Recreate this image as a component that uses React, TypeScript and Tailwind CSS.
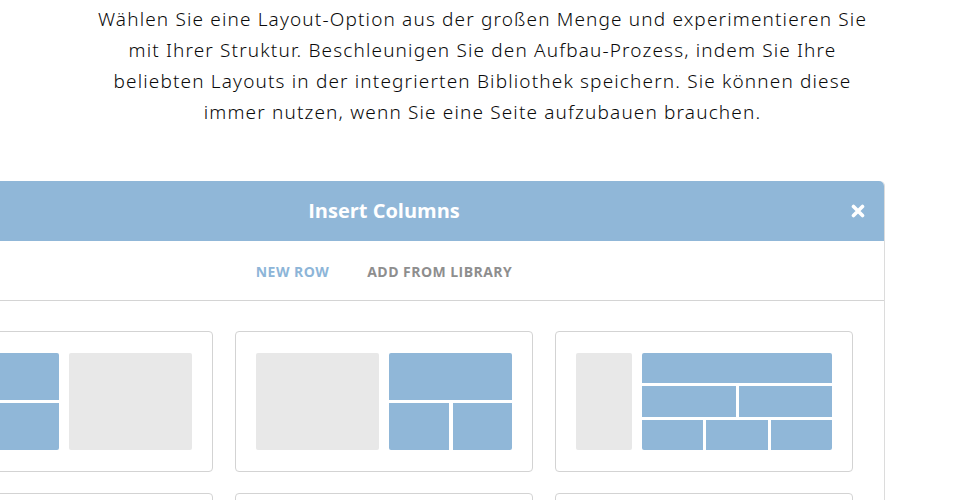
import React from 'react';

const BLUE = 'bg-[#90b7d8]';

const Gray = ({ className = '' }: { className?: string }) => (
  <div className={`bg-[#e8e8e8] rounded-[2px] ${className}`} />
);

// one layout preview card
const Card = ({ children }: { children: React.ReactNode }) => (
  <div className="w-[298px] h-[141px] shrink-0 border border-[#d3d3d3] rounded-[4px] px-[20px] py-[21px]">
    <div className="flex h-full gap-[10px]">{children}</div>
  </div>
);

const StackedBlue = () => (
  <div className="w-[123px] flex flex-col gap-[3px] rounded-[2px] overflow-hidden">
    <div className={`flex-1 ${BLUE}`} />
    <div className={`flex-1 ${BLUE}`} />
  </div>
);

export default function App() {
  return (
    <div className="w-[965px] h-[500px] overflow-hidden bg-white">
      <p
        className="pt-[4px] text-center text-[19px] leading-[31px] font-light text-[#0a0a0a] tracking-[1.15px]"
        style={{ fontFamily: '"Noto Sans", "Open Sans", sans-serif' }}
      >
        Wählen Sie eine Layout-Option aus der großen Menge und experimentieren Sie
        <br />
        mit Ihrer Struktur. Beschleunigen Sie den Aufbau-Prozess, indem Sie Ihre
        <br />
        beliebten Layouts in der integrierten Bibliothek speichern. Sie können diese
        <br />
        immer nutzen, wenn Sie eine Seite aufzubauen brauchen.
      </p>

      <div
        className="mt-[53px] ml-[-116px] w-[1001px] border-r border-[#dcdcdc] rounded-tr-[5px]"
        style={{ fontFamily: '"Open Sans", sans-serif' }}
      >
        <div className={`relative h-[60px] ${BLUE} rounded-t-[5px] flex items-center justify-center`}>
          <h2 className="text-white text-[20px] font-bold">Insert Columns</h2>
          <button className="absolute right-[19px] top-[23px] text-white">
            <svg width="14" height="14" viewBox="0 0 14 14">
              <path d="M2.5 2.5 L11.5 11.5 M11.5 2.5 L2.5 11.5" stroke="white" strokeWidth="3.6" strokeLinecap="round" />
            </svg>
          </button>
        </div>

        <div className="h-[60px] border-b border-[#d4d4d4] flex items-center justify-center gap-[38px] pt-[1px] text-[14px] font-bold tracking-[0.45px]">
          <span className="text-[#8db5d8]">NEW ROW</span>
          <span className="text-[#8e8e8e]">ADD FROM LIBRARY</span>
        </div>

        <div className="pl-[31px] pr-[30px] pt-[30px] flex flex-col gap-[21px]">
          <div className="flex gap-[22px]">
            <Card>
              <StackedBlue />
              <Gray className="w-[123px]" />
            </Card>
            <Card>
              <Gray className="w-[123px]" />
              <div className="w-[123px] flex flex-col gap-[3px] rounded-[2px] overflow-hidden">
                <div className={`flex-1 ${BLUE}`} />
                <div className="flex-1 flex gap-[4px]">
                  <div className={`flex-1 ${BLUE}`} />
                  <div className={`flex-1 ${BLUE}`} />
                </div>
              </div>
            </Card>
            <Card>
              <Gray className="w-[56px]" />
              <div className="w-[190px] flex flex-col gap-[3px] rounded-[2px] overflow-hidden">
                <div className={`flex-1 ${BLUE}`} />
                <div className="flex-1 flex gap-[3px]">
                  <div className={`flex-1 ${BLUE}`} />
                  <div className={`flex-1 ${BLUE}`} />
                </div>
                <div className="flex-1 flex gap-[3px]">
                  <div className={`flex-1 ${BLUE}`} />
                  <div className={`flex-1 ${BLUE}`} />
                  <div className={`flex-1 ${BLUE}`} />
                </div>
              </div>
            </Card>
          </div>
          <div className="flex gap-[22px]">
            <Card>
              <Gray className="flex-1" />
            </Card>
            <Card>
              <Gray className="flex-1" />
            </Card>
            <Card>
              <Gray className="flex-1" />
            </Card>
          </div>
        </div>
      </div>
    </div>
  );
}
